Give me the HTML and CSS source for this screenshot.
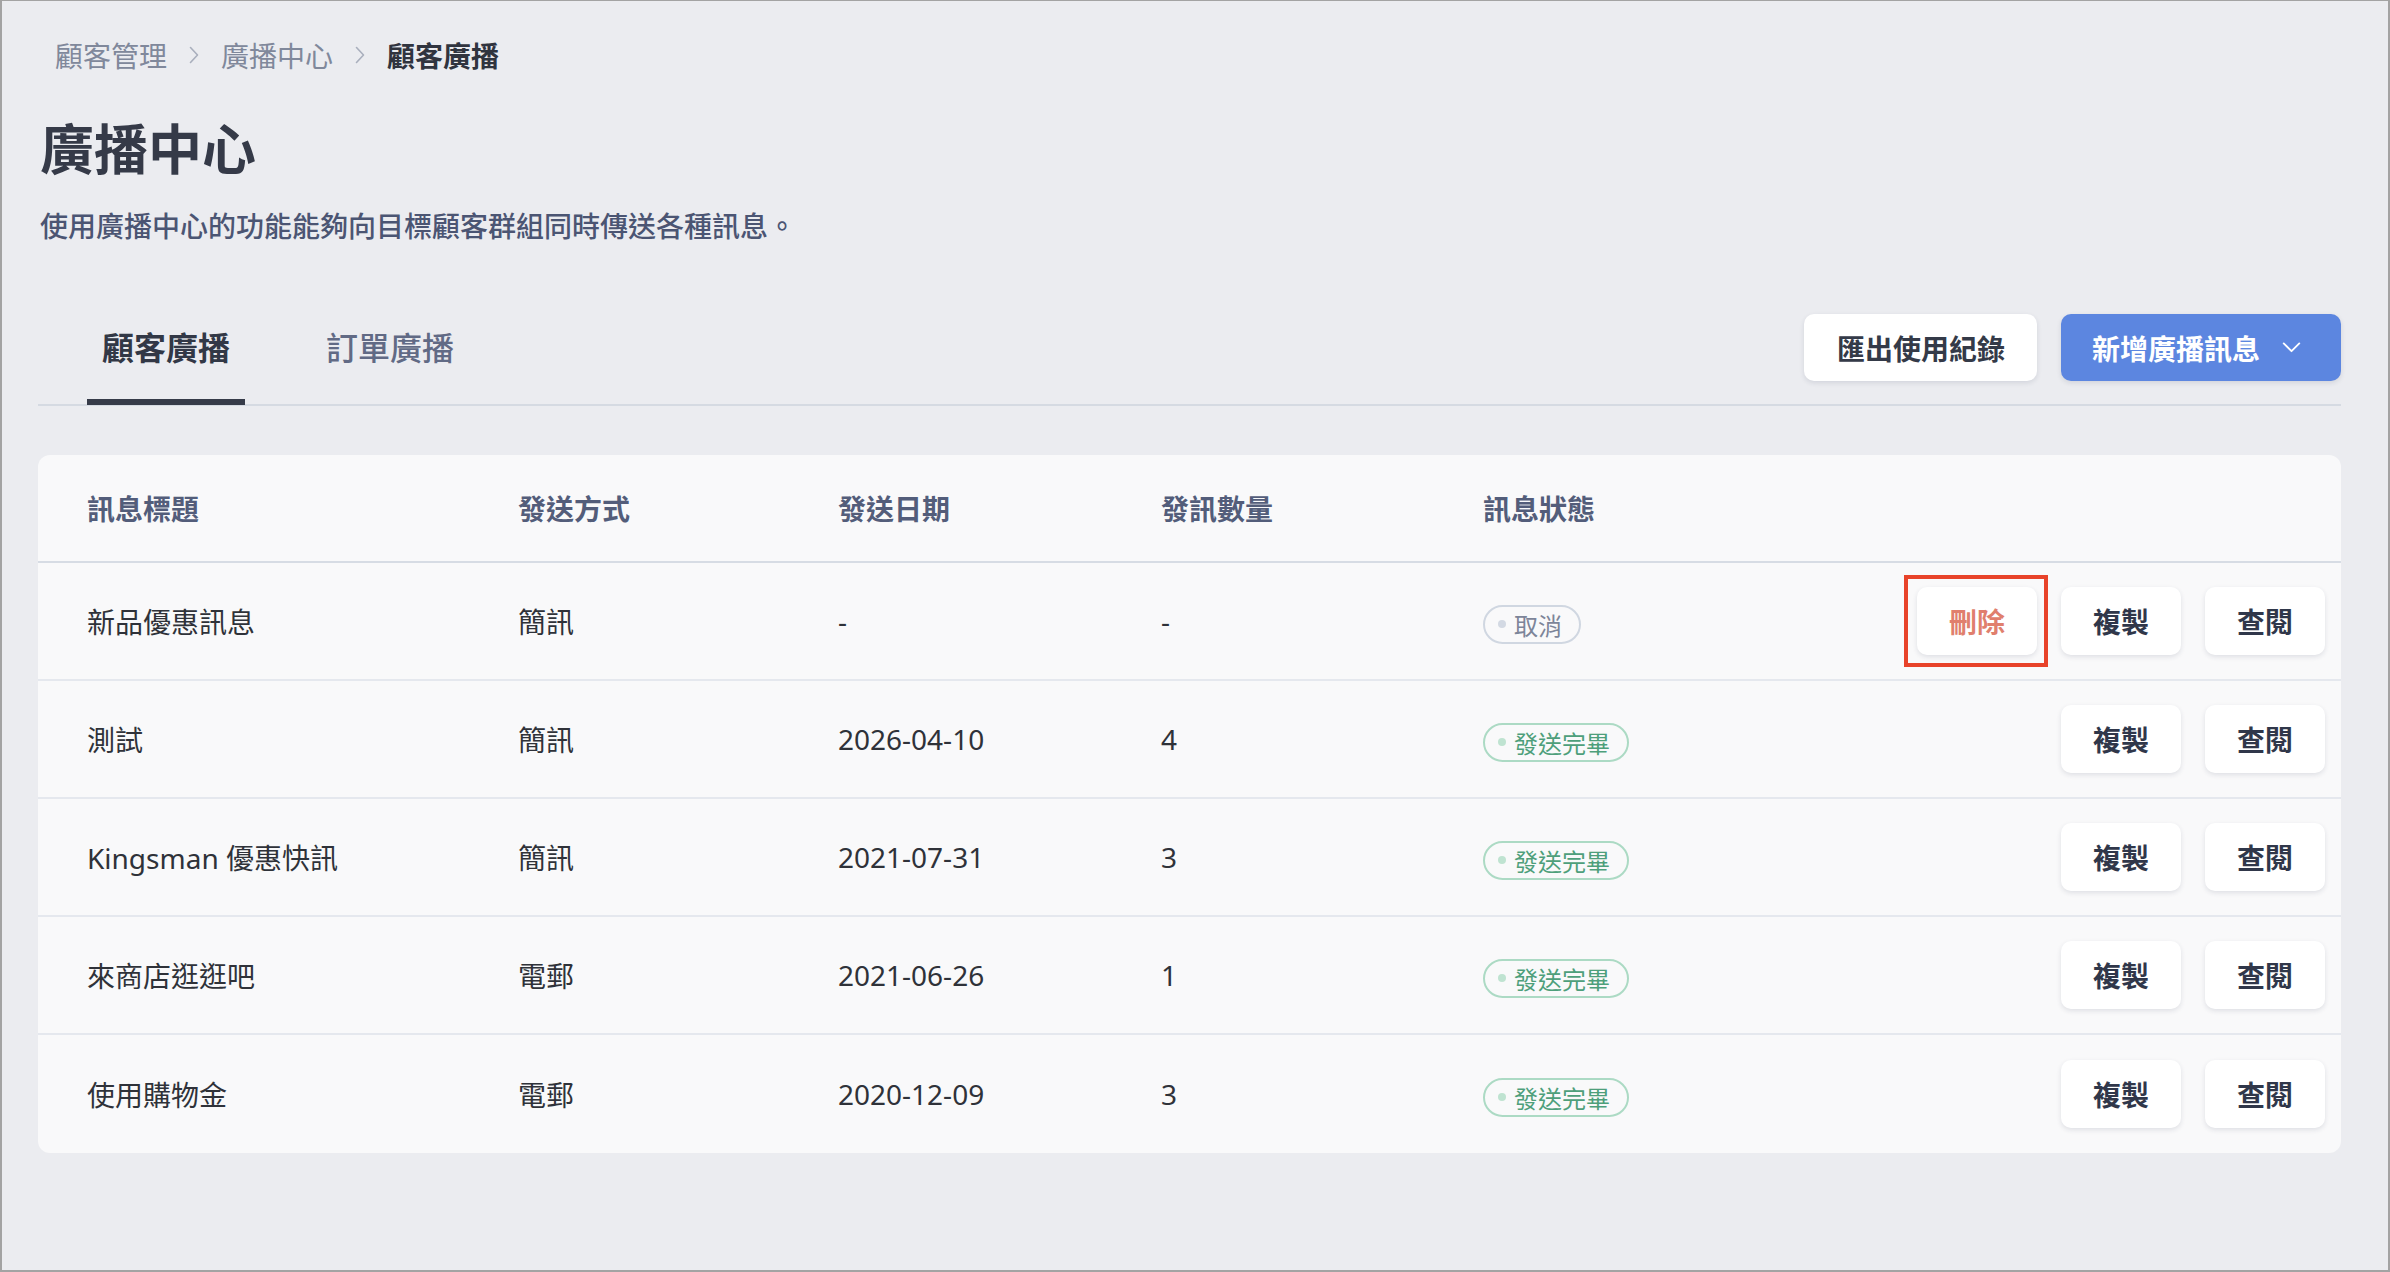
FILE: index.html
```html
<!DOCTYPE html>
<html lang="zh-Hant">

<head>
    <meta charset="UTF-8">
    <meta name="viewport" content="width=device-width, initial-scale=1.0">
    <title>廣播中心</title>
    <link rel="stylesheet" href="styles.css">
</head>

<body>
<div class="page">

    <!-- Breadcrumb -->
    <nav class="crumbs">
        <span class="crumb">顧客管理</span>
        <svg class="crumb-sep" viewBox="0 0 10 18" width="10" height="18"><path d="M1.5 1.5 L8.5 9 L1.5 16.5" fill="none" stroke="#a9afbd" stroke-width="1.6" stroke-linecap="round" stroke-linejoin="round"/></svg>
        <span class="crumb">廣播中心</span>
        <svg class="crumb-sep" viewBox="0 0 10 18" width="10" height="18"><path d="M1.5 1.5 L8.5 9 L1.5 16.5" fill="none" stroke="#a9afbd" stroke-width="1.6" stroke-linecap="round" stroke-linejoin="round"/></svg>
        <span class="crumb current">顧客廣播</span>
    </nav>

    <h1 class="title">廣播中心</h1>
    <p class="subtitle">使用廣播中心的功能能夠向目標顧客群組同時傳送各種訊息。</p>

    <!-- Tabs + toolbar -->
    <div class="tabbar">
        <div class="tabs">
            <button class="tab active" type="button">顧客廣播</button>
            <button class="tab" type="button">訂單廣播</button>
        </div>
        <div class="toolbar">
            <button class="btn-light" type="button">匯出使用紀錄</button>
            <button class="btn-primary" type="button">
                新增廣播訊息
                <svg viewBox="0 0 20 12" width="19" height="11"><path d="M1.5 1.5 L10 10 L18.5 1.5" fill="none" stroke="#fff" stroke-width="2" stroke-linecap="round" stroke-linejoin="round"/></svg>
            </button>
        </div>
    </div>

    <!-- Broadcast list -->
    <div class="card">
        <div class="row head">
            <div>訊息標題</div>
            <div>發送方式</div>
            <div>發送日期</div>
            <div>發訊數量</div>
            <div>訊息狀態</div>
            <div></div>
        </div>
        <div id="tableBody"></div>
    </div>

</div>

<script>
    // Broadcast entries shown in the list
    const broadcasts = [
        { title: "新品優惠訊息", method: "簡訊", date: "-", count: "-", status: "cancel" },
        { title: "測試", method: "簡訊", date: "2026-04-10", count: "4", status: "done" },
        { title: "Kingsman 優惠快訊", method: "簡訊", date: "2021-07-31", count: "3", status: "done" },
        { title: "來商店逛逛吧", method: "電郵", date: "2021-06-26", count: "1", status: "done" },
        { title: "使用購物金", method: "電郵", date: "2020-12-09", count: "3", status: "done" }
    ];

    const statusText = { cancel: "取消", done: "發送完畢" };

    function renderRows() {
        const body = document.getElementById("tableBody");
        body.innerHTML = "";
        broadcasts.forEach(item => {
            const row = document.createElement("div");
            row.className = "row";
            // cancelled broadcasts can still be deleted
            const del = item.status === "cancel"
                ? `<button class="btn-act danger marked" type="button">刪除</button>` : "";
            row.innerHTML = `
                <div>${item.title}</div>
                <div>${item.method}</div>
                <div>${item.date}</div>
                <div>${item.count}</div>
                <div><span class="badge ${item.status}"><i></i>${statusText[item.status]}</span></div>
                <div class="actions">
                    ${del}
                    <button class="btn-act" type="button">複製</button>
                    <button class="btn-act" type="button">查閱</button>
                </div>
            `;
            body.appendChild(row);
        });
    }

    renderRows();
</script>
</body>

</html>
```

FILE: styles.css
```css
/* Page base */
* {
    box-sizing: border-box;
}

body {
    margin: 0;
    font-family: "Noto Sans", "Noto Sans CJK TC", sans-serif;
    background-color: #ebecf0;
}

.page {
    height: 100vh;
    border: 2px solid #a3a3a3;
    border-top-width: 1px;
    padding: 0 47px 0 36px;
    background-color: #ebecf0;
}

button {
    font-family: inherit;
    border: none;
    cursor: pointer;
}

/* Breadcrumb */
.crumbs {
    display: flex;
    align-items: center;
    gap: 22px;
    height: 40px;
    margin-top: 34px;
    padding-left: 17px;
    font-size: 28px;
}

.crumb {
    color: #80889b;
}

.crumb.current {
    color: #30343f;
    font-weight: 700;
}

/* Heading */
.title {
    margin: 43px 0 0 2px;
    font-size: 54px;
    line-height: 62px;
    font-weight: 700;
    color: #353a48;
}

.subtitle {
    margin: 28px 0 0 2px;
    font-size: 28px;
    line-height: 36px;
    font-weight: 500;
    color: #4b5573;
}

/* Tabs row */
.tabbar {
    display: flex;
    justify-content: space-between;
    align-items: flex-end;
    margin-top: 70px;
    border-bottom: 2px solid #d5dae2;
}

.tabs {
    display: flex;
    gap: 66px;
    padding-left: 49px;
}

.tab {
    padding: 0 15px 30px;
    font-size: 32px;
    line-height: 42px;
    font-weight: 500;
    color: #616a85;
    background: none;
    border-bottom: 6px solid transparent;
    margin-bottom: -1px;
}

.tab.active {
    color: #323846;
    font-weight: 700;
    border-bottom-color: #363b49;
}

.toolbar {
    display: flex;
    gap: 24px;
    margin-bottom: 23px;
}

.btn-light,
.btn-primary {
    height: 67px;
    font-size: 28px;
    font-weight: 700;
    border-radius: 10px;
    box-shadow: 0 2px 5px rgba(30, 40, 70, 0.12);
}

.btn-light {
    padding: 0 32px 0 33px;
    background-color: #fff;
    color: #343a48;
}

.btn-primary {
    display: flex;
    align-items: center;
    gap: 22px;
    padding: 0 40px 0 31px;
    background-color: #5c86e0;
    color: #fff;
}

/* List card */
.card {
    margin-top: 49px;
    background-color: #f9f9fa;
    border-radius: 12px;
    padding: 0 16px 0 49px;
}

.row {
    display: grid;
    grid-template-columns: 431px 320px 323px 322px 1fr auto;
    align-items: center;
    height: 118px;
    font-size: 28px;
    color: #2f3239;
    border-bottom: 2px solid #e5e8ee;
    margin: 0 -16px 0 -49px;
    padding: 0 16px 0 49px;
}

.row:last-child {
    border-bottom: none;
}

.row.head {
    height: 108px;
    font-weight: 700;
    color: #535d7a;
    border-bottom: 2px solid #d7dce4;
}

/* Status badge */
.badge {
    display: inline-flex;
    align-items: center;
    gap: 8px;
    height: 39px;
    padding: 0 17px 0 13px;
    border: 2px solid #d0d7e1;
    border-radius: 20px;
    font-size: 24px;
    color: #7d8599;
}

.badge i {
    width: 8px;
    height: 8px;
    border-radius: 50%;
    background-color: #d3d9e3;
}

.badge.done {
    border-color: #acdac4;
    color: #4e9f7b;
}

.badge.done i {
    background-color: #bfe3d1;
}

/* Row actions */
.actions {
    display: flex;
    gap: 24px;
}

.btn-act {
    position: relative;
    width: 120px;
    height: 68px;
    font-size: 28px;
    font-weight: 700;
    color: #30374a;
    background-color: #fff;
    border-radius: 10px;
    box-shadow: 0 2px 5px rgba(30, 40, 70, 0.12);
}

.btn-act.danger {
    color: #e07f6d;
}

/* square marker frame drawn around a button */
.btn-act.marked::after {
    content: "";
    position: absolute;
    top: -12px;
    bottom: -12px;
    left: -13px;
    right: -11px;
    border: 4px solid #e8432a;
}
```
